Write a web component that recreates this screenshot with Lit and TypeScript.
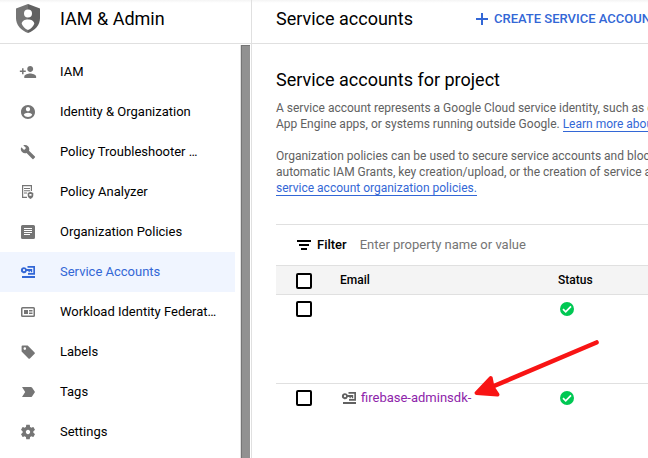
import { LitElement, html, css, svg, nothing } from "lit";
import { customElement, property } from "lit/decorators.js";

// Glyphs are drawn on an 18-unit grid.
const scaled = (d: string) => svg`<path transform="translate(.6 .6) scale(.7)" d=${d} />`;

const glyphs: Record<string, unknown> = {
  iam: svg`<path transform="translate(.1 .1) scale(.74)" d="M15 12c2.21 0 4-1.79 4-4s-1.79-4-4-4-4 1.79-4 4 1.79 4 4 4zm-9-2V7H4v3H1v2h3v3h2v-3h3v-2H6zm9 4c-2.67 0-8 1.34-8 4v2h16v-2c0-2.66-5.33-4-8-4z"/>`,
  identity: scaled("M12 2C6.48 2 2 6.48 2 12s4.48 10 10 10 10-4.48 10-10S17.52 2 12 2zm0 3c1.66 0 3 1.34 3 3s-1.34 3-3 3-3-1.34-3-3 1.34-3 3-3zm0 14.2c-2.5 0-4.71-1.28-6-3.22.03-1.99 4-3.08 6-3.08 1.99 0 5.97 1.09 6 3.08-1.29 1.94-3.5 3.22-6 3.22z"),
  wrench: svg`<path transform="translate(1.2 1.2) scale(.65)" d="M22.7 19l-9.1-9.1c.9-2.3.4-5-1.5-6.9-2-2-5-2.4-7.4-1.3L9 6 6 9 1.6 4.7C.4 7.1.9 10.1 2.9 12.1c1.9 1.9 4.6 2.4 6.9 1.5l9.1 9.1c.4.4 1 .4 1.4 0l2.3-2.3c.5-.4.5-1.1.1-1.4z"/>`,
  analyzer: svg`<path d="M8 14.400H3.600V2.600h8.800V8" fill="none" stroke="currentColor" stroke-width="1.200"/><path d="M5 5h6v1H5zM5 7.300h6v1H5zM5 9.600h3v1H5z"/><path fill-rule="evenodd" d="M11.500 8.800l2.800 1.200v2.300c0 1.800-1.100 3-2.800 3.700-1.700-.7-2.800-1.900-2.800-3.700V10zM10.300 11v1.800h2.200V11z"/>`,
  policies: svg`<path fill-rule="evenodd" d="M3.500 2h11A1.500 1.500 0 0 1 16 3.500v11a1.500 1.500 0 0 1-1.500 1.500h-11A1.500 1.500 0 0 1 2 14.500v-11A1.500 1.500 0 0 1 3.500 2zM5 5v1h8V5zM5 7v1h8V7zM5 9v1h8V9zM5 11v1h6v-1z"/>`,
  service: svg`<path fill-rule="evenodd" d="M5 4.200c1.300 0 2.300.8 2.800 1.900H13.200v3.200h-1.400V8h-1v1.200H9.500V8H7.800A3 3 0 1 1 5 4.200zm0 1.900a1.100 1.100 0 1 0 0 2.200 1.100 1.100 0 0 0 0-2.200z"/><path d="M8.500 3H16v8.700H9V10h5.300V4.800H8.500zM3 13h13v2H3z"/>`,
  workload: svg`<path fill-rule="evenodd" d="M3.500 4h11A1.500 1.500 0 0 1 16 5.500v7a1.500 1.500 0 0 1-1.500 1.500h-11A1.500 1.500 0 0 1 2 12.500v-7A1.500 1.500 0 0 1 3.500 4zM3.500 5.500v7h11v-7z"/><path d="M5 7h4v4H5zM10 7h3.500v1.500H10zM10 9.500h3.500V11H10z"/>`,
  label: svg`<path fill-rule="evenodd" d="M3.500 2.500h5.200L15.600 9.400a1 1 0 0 1 0 1.400l-4.700 4.700a1 1 0 0 1-1.400 0L2.600 8.600V3.500a1 1 0 0 1 .9-1zM5.800 4.300a1.300 1.300 0 1 0 0 2.600 1.300 1.300 0 0 0 0-2.600z"/>`,
  tag: svg`<path d="M3 4h8.800c.5 0 .9.200 1.200.6L16 9l-3 4.400c-.3.4-.7.600-1.200.6H3l3.200-5z"/>`,
  settings: svg`<path transform="translate(.36 .36) scale(.72)" fill-rule="evenodd" d="M19.430 12.980c.04-.32.07-.64.07-.98s-.03-.66-.07-.98l2.110-1.650c.19-.15.24-.42.12-.64l-2-3.460c-.12-.22-.39-.3-.61-.22l-2.490 1c-.52-.4-1.080-.73-1.690-.98l-.38-2.650C14.460 2.180 14.250 2 14 2h-4c-.25 0-.46.18-.49.42l-.38 2.650c-.61.25-1.170.59-1.690.98l-2.490-1c-.23-.09-.49 0-.61.22l-2 3.460c-.13.22-.07.49.12.64l2.110 1.650c-.04.32-.07.65-.07.98s.03.66.07.98l-2.110 1.650c-.19.15-.24.42-.12.64l2 3.460c.12.22.39.3.61.22l2.490-1c.52.4 1.080.73 1.690.98l.38 2.650c.03.24.24.42.49.42h4c.25 0 .46-.18.49-.42l.38-2.650c.61-.25 1.170-.59 1.690-.98l2.490 1c.23.09.49 0 .61-.22l2-3.460c.12-.22.07-.49-.12-.64l-2.110-1.650zM12 15c-1.660 0-3-1.340-3-3s1.340-3 3-3 3 1.340 3 3-1.340 3-3 3z"/>`,
  plus: svg`<path d="M3 8h5V3h2v5h5v2h-5v5H8v-5H3z"/>`,
  filter: svg`<path d="M2 4h14v2H2zM4 8h10v2H4zM6 12h6v2H6z"/>`,
  ok: svg`<circle cx="9" cy="9" r="7"/><path d="M5 9.200l2.700 2.700L13 6.400" fill="none" stroke="#fff" stroke-width="1.700"/>`,
};

@customElement("ui-icon")
class UiIcon extends LitElement {
  @property() name = "";
  static styles = css`
    :host { display: block; flex: none; width: 18px; height: 18px; }
    .glyph { display: block; fill: currentColor; }
  `;
  render() {
    return html`<svg class="glyph" width="18" height="18" viewBox="0 0 18 18" aria-hidden="true">${glyphs[this.name]}</svg>`;
  }
}

const navItems = [
  { icon: "iam", label: "IAM" },
  { icon: "identity", label: "Identity & Organization" },
  { icon: "wrench", label: "Policy Troubleshooter …" },
  { icon: "analyzer", label: "Policy Analyzer" },
  { icon: "policies", label: "Organization Policies" },
  { icon: "service", label: "Service Accounts", current: true },
  { icon: "workload", label: "Workload Identity Federat…" },
  { icon: "label", label: "Labels" },
  { icon: "tag", label: "Tags" },
  { icon: "settings", label: "Settings" },
];

@customElement("side-nav")
class SideNav extends LitElement {
  static styles = css`
    :host { display: flex; flex-direction: column; box-sizing: border-box; border-right: 1px solid #e0e0e0; }
    .brand {
      display: flex; align-items: center; gap: 20px; height: 37px;
      padding: 0 16px 6px; border-bottom: 1px solid #e0e0e0;
    }
    .shield { flex: none; display: block; }
    .product { margin: 0; font-size: 18px; line-height: 24px; font-weight: 400; }
    .body { display: flex; flex: 1; padding-top: 1px; }
    .list { flex: 1; min-width: 0; margin: 0; padding: 7px 6px 0 0; list-style: none; }
    .link {
      display: flex; align-items: center; gap: 23px; height: 40px; padding-left: 19px;
      color: #000; text-decoration: none; font-size: 13px; line-height: 16px; white-space: nowrap;
    }
    .link ui-icon { color: #757575; }
    .link.current, .link.current ui-icon { color: #3367d6; }
    .link.current { background: #f0f5ff; }
    .track {
      flex: none; width: 8px; margin-right: 1px; background: #919191;
      border-left: 1px solid #757575; border-top: 1px solid #757575; box-shadow: -1px 0 #e0e0e0;
    }
  `;
  render() {
    return html`
      <div class="brand">
        <svg class="shield" width="24" height="29" viewBox="0 0 24 29" aria-hidden="true">
          <path fill="#757575" d="M12 0L0 4.500V14c0 7 5 12.500 12 15z" />
          <path fill="#616161" d="M12 0l12 4.500V14c0 7-5 12.500-12 15z" />
          <circle cx="12" cy="9.500" r="4" fill="#fff" />
          <path fill="#fff" d="M12 15.500c3 0 6.300 1.500 6.300 4.200-1.200 2.900-3.300 5-6.300 6.300-3-1.300-5.100-3.400-6.300-6.300 0-2.700 3.300-4.200 6.300-4.200z" />
        </svg>
        <h2 class="product">IAM &amp; Admin</h2>
      </div>
      <nav class="body" aria-label="IAM and Admin">
        <ul class="list">
          ${navItems.map((item) => html`
            <li>
              <a class="link ${item.current ? "current" : ""}" href="#" aria-current=${item.current ? "page" : nothing}>
                <ui-icon name=${item.icon}></ui-icon><span>${item.label}</span>
              </a>
            </li>`)}
        </ul>
        <div class="track"></div>
      </nav>
    `;
  }
}

@customElement("account-table")
class AccountTable extends LitElement {
  static styles = css`
    :host { display: block; border-top: 1px solid #e0e0e0; font-size: 13px; line-height: 16px; }
    .filter { display: flex; align-items: center; height: 40px; padding-left: 19px; }
    .caption { margin: 0 13px 0 4px; font-weight: 500; }
    .query {
      flex: 1; min-width: 0; height: 16px; border: 0; padding: 0; outline: 0;
      background: none; font: inherit; color: #000;
    }
    .query::placeholder { color: #757575; opacity: 1; }
    .table { width: 100%; border-collapse: separate; border-spacing: 0; table-layout: fixed; }
    .pick { width: 64px; }
    .email { width: 218px; }
    th, td { padding: 0; text-align: left; vertical-align: top; border-top: 1px solid #e0e0e0; }
    th { height: 28px; background: #f4f4f4; font-size: 12px; line-height: 28px; font-weight: 500; }
    td { height: 88px; }
    .cell { display: flex; align-items: center; height: 28px; }
    .box {
      appearance: none; display: block; width: 16px; height: 16px; margin: 0 0 0 20px;
      border: 2px solid #000; border-radius: 2px; background: #fff;
    }
    th .box { margin-top: 2px; }
    .box:checked { background: #000; }
    .ok { color: #00c853; }
    .key { color: #616161; }
    .account { position: relative; gap: 3px; }
    .account a { color: #8e24aa; text-decoration: none; }
    .arrow { position: absolute; left: 132px; top: -48px; z-index: 1; pointer-events: none; }
  `;
  render() {
    return html`
      <div class="filter">
        <ui-icon name="filter"></ui-icon>
        <label class="caption" for="query">Filter</label>
        <input class="query" id="query" placeholder="Enter property name or value" />
      </div>
      <table class="table">
        <colgroup><col class="pick" /><col class="email" /><col /></colgroup>
        <thead>
          <tr>
            <th><div class="cell"><input class="box" type="checkbox" aria-label="Select all" /></div></th>
            <th>Email</th>
            <th>Status</th>
          </tr>
        </thead>
        <tbody>
          <tr>
            <td><div class="cell"><input class="box" type="checkbox" aria-label="Select account" /></div></td>
            <td></td>
            <td><div class="cell"><ui-icon class="ok" name="ok"></ui-icon></div></td>
          </tr>
          <tr>
            <td><div class="cell"><input class="box" type="checkbox" aria-label="Select firebase-adminsdk" /></div></td>
            <td>
              <div class="cell account">
                <ui-icon class="key" name="service"></ui-icon>
                <a href="#">firebase-adminsdk-</a>
                <svg class="arrow" width="130" height="64" viewBox="0 0 130 64" aria-hidden="true">
                  <path d="M124.500 6.500L16 52.500" fill="none" stroke="#f81414" stroke-width="4.600" stroke-linecap="round" />
                  <path d="M4.500 57L18.700 42l1.800 9L25.500 58.500z" fill="#f81414" stroke="#f81414" stroke-width="4" stroke-linejoin="round" />
                </svg>
              </div>
            </td>
            <td><div class="cell"><ui-icon class="ok" name="ok"></ui-icon></div></td>
          </tr>
        </tbody>
      </table>
    `;
  }
}

@customElement("app-root")
class AppRoot extends LitElement {
  static styles = css`
    :host {
      display: grid; grid-template-columns: 252px minmax(0, 1fr); height: 100vh; overflow: hidden;
      background: linear-gradient(#f4f4f4, #fff 3px); color: #000;
      font-family: Roboto, "Liberation Sans", sans-serif;
    }
    .bar {
      display: flex; align-items: center; gap: 60px; height: 37px; padding: 0 0 6px 24px;
      border-bottom: 1px solid #e0e0e0; white-space: nowrap;
    }
    .heading { margin: 0; font-size: 18px; line-height: 24px; font-weight: 400; }
    .create {
      display: flex; align-items: center; gap: 3px; padding: 0; border: 0; background: none;
      color: #3367d6; font: inherit; font-size: 13px; font-weight: 500; white-space: nowrap;
    }
    .content { padding: 24px 0 0 24px; }
    .text { margin: 8px 0 16px; font-size: 12px; line-height: 16px; color: #616161; white-space: nowrap; }
    .text + .text { margin: 0 0 28px; }
    .text a { color: #3367d6; text-decoration: none; border-bottom: 1px solid #3367d6; }
  `;
  render() {
    return html`
      <side-nav></side-nav>
      <main>
        <header class="bar">
          <h1 class="heading">Service accounts</h1>
          <button class="create"><ui-icon name="plus"></ui-icon>CREATE SERVICE ACCOUNT</button>
        </header>
        <section class="content">
          <h2 class="heading">Service accounts for project</h2>
          <p class="text">
            A service account represents a Google Cloud service identity, such as code running on VMs,<br />
            App Engine apps, or systems running outside Google. <a href="#">Learn more about service accounts.</a>
          </p>
          <p class="text">
            Organization policies can be used to secure service accounts and block risky features such as<br />
            automatic IAM Grants, key creation/upload, or the creation of service accounts entirely.<br />
            <a href="#">service account organization policies.</a>
          </p>
          <account-table></account-table>
        </section>
      </main>
    `;
  }
}
